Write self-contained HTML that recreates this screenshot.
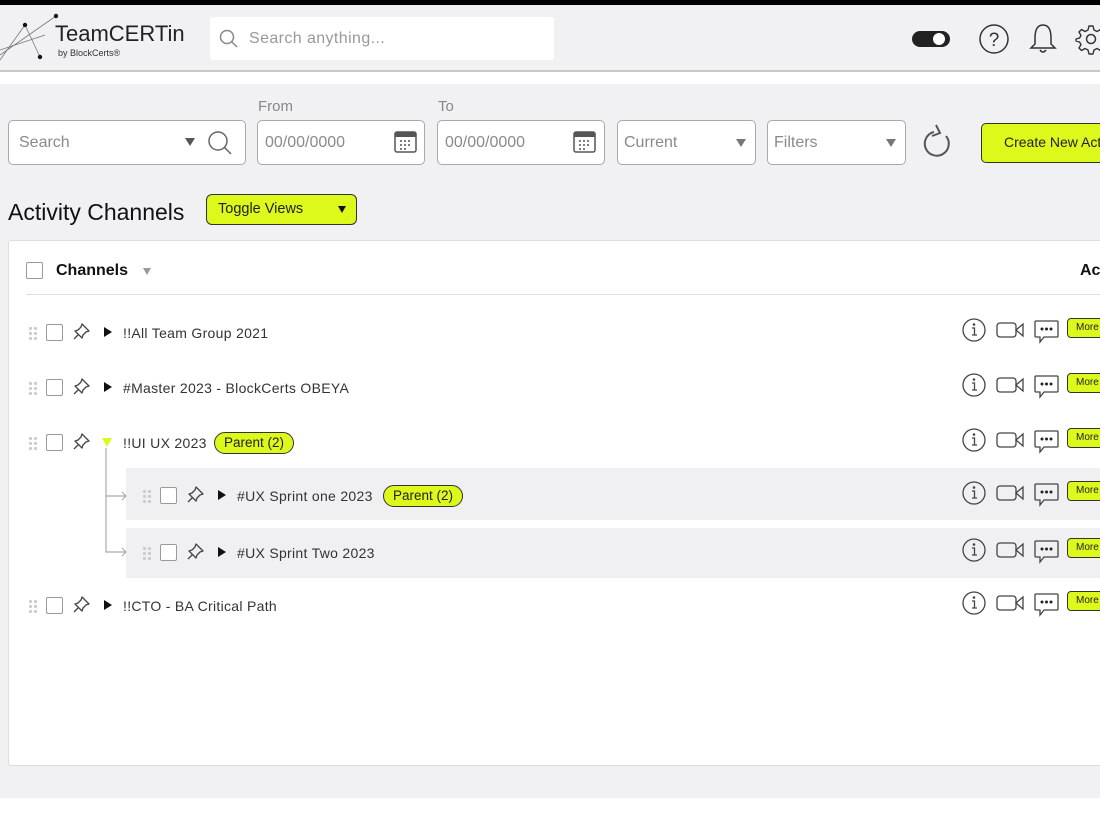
<!DOCTYPE html>
<html><head><meta charset="utf-8">
<style>
*{box-sizing:border-box;margin:0;padding:0}
body{width:1100px;height:825px;overflow:hidden;background:#fff;font-family:"Liberation Sans",sans-serif;position:relative;color:#222}
.a{position:absolute;white-space:nowrap}
.box{position:absolute;background:#fff;border:1px solid #a9a9a9;border-radius:5px}
.ph{position:absolute;color:#8a8a8a;font-size:16px}
.cb{position:absolute;width:17px;height:17px;border:1.5px solid #999;border-radius:2px;background:#fff}
.lbl{position:absolute;font-size:14px;color:#333;letter-spacing:.3px;white-space:nowrap}
.pill{position:absolute;background:#ddf81b;border:1.5px solid #333;border-radius:11px;font-size:13.5px;height:22px;line-height:19px;padding:0 9px;color:#222;white-space:nowrap}
.more{position:absolute;left:1067px;width:50px;height:20px;background:#ddf81b;border:1.5px solid #333;border-radius:4px;font-size:10px;line-height:17px;padding-left:8px}
.tri{position:absolute;width:0;height:0;border-top:5px solid transparent;border-bottom:5px solid transparent;border-left:8px solid #111}
.drag{position:absolute;width:10px;height:14px;background:radial-gradient(circle,#ccc 1.6px,transparent 1.8px) 0 0/5px 5px}
</style></head><body>
<div class="a" style="left:0;top:0;width:1100px;height:5px;background:#000"></div>
<div class="a" style="left:0;top:5px;width:1100px;height:67px;background:#f1f0f3;border-bottom:2px solid #c8c8c8"></div>
<svg class="a" style="left:0;top:10px" width="70" height="55"><g stroke="#777" stroke-width=".8" fill="none"><line x1="0" y1="45" x2="56" y2="6"/><line x1="0" y1="50" x2="25" y2="15"/><line x1="25" y1="15" x2="40" y2="47"/><line x1="0" y1="40" x2="45" y2="25"/></g><g fill="#111"><circle cx="56" cy="6" r="2.2"/><circle cx="25" cy="15" r="2.2"/><circle cx="40" cy="47" r="2.2"/></g></svg>
<div class="a" style="left:55px;top:21px;font-size:22px;color:#222">TeamCERTin</div>
<div class="a" style="left:58px;top:48px;font-size:9px;color:#333">by BlockCerts®</div>
<div class="a" style="left:210px;top:17px;width:344px;height:43px;background:#fff;border-radius:3px"></div>
<svg class="a" style="left:219px;top:29px" width="20" height="20"><circle cx="8" cy="8" r="6.5" stroke="#888" stroke-width="1.5" fill="none"/><line x1="13" y1="13" x2="18" y2="18" stroke="#888" stroke-width="1.5"/></svg>
<div class="a" style="left:249px;top:30px;font-size:16px;color:#999;letter-spacing:.4px">Search anything...</div>
<div class="a" style="left:912px;top:31px;width:38px;height:16px;background:#222;border-radius:8px"></div>
<div class="a" style="left:933px;top:33px;width:12px;height:12px;background:#fff;border-radius:6px"></div>
<svg class="a" style="left:978px;top:23px" width="32" height="32"><circle cx="16" cy="16" r="14" stroke="#333" stroke-width="1.5" fill="none"/><text x="16" y="23" font-size="19" text-anchor="middle" fill="#333" font-family="Liberation Sans">?</text></svg>
<svg class="a" style="left:1028px;top:22px" width="30" height="34"><path d="M15 3 C8 3 7 10 7 16 L7 22 L3 26 L27 26 L23 22 L23 16 C23 10 22 3 15 3Z" stroke="#333" stroke-width="1.5" fill="none"/><path d="M12 28 Q15 32 18 28" stroke="#333" stroke-width="1.5" fill="none"/></svg>
<svg class="a" style="left:1075px;top:23px" width="32" height="32"><circle cx="16" cy="16" r="4.5" stroke="#333" stroke-width="1.5" fill="none"/><path d="M14 3 H18 L19 7 L22 8.5 L25.5 6.5 L28 9 L26 12.5 L27.5 15 L31 16 V18 L27.5 19 L26 21.5 L28 25 L25.5 27.5 L22 25.5 L19 27 L18 31 H14 L13 27 L10 25.5 L6.5 27.5 L4 25 L6 21.5 L4.5 19 L1 18 V16 L4.5 15 L6 12.5 L4 9 L6.5 6.5 L10 8.5 L13 7Z" stroke="#333" stroke-width="1.4" fill="none" stroke-linejoin="round"/></svg>
<div class="a" style="left:0;top:84px;width:1100px;height:714px;background:#f1f0f3"></div>
<div class="a" style="left:258px;top:98px;font-size:15px;color:#888">From</div>
<div class="a" style="left:438px;top:98px;font-size:15px;color:#888">To</div>
<div class="box" style="left:8px;top:120px;width:238px;height:45px"></div>
<div class="ph" style="left:19px;top:134px">Search</div>
<div class="a" style="left:185px;top:138px;border-left:5px solid transparent;border-right:5px solid transparent;border-top:8px solid #555"></div>
<svg class="a" style="left:206px;top:129px" width="28" height="28"><circle cx="12" cy="12" r="9" stroke="#666" stroke-width="1.5" fill="none"/><line x1="18" y1="18" x2="25" y2="25" stroke="#666" stroke-width="1.5"/></svg>
<div class="box" style="left:257px;top:120px;width:168px;height:45px"></div>
<div class="ph" style="left:265px;top:134px">00/00/0000</div>
<div class="box" style="left:437px;top:120px;width:168px;height:45px"></div>
<div class="ph" style="left:445px;top:134px">00/00/0000</div>
<svg class="a" style="left:393px;top:129px" width="26" height="26"><rect x="2" y="3" width="21" height="20" rx="2" fill="none" stroke="#555" stroke-width="1.5"/><rect x="2" y="3" width="21" height="5" fill="#555"/><g fill="#555"><circle cx="8" cy="12" r="1"/><circle cx="12" cy="12" r="1"/><circle cx="16" cy="12" r="1"/><circle cx="8" cy="16" r="1"/><circle cx="12" cy="16" r="1"/><circle cx="16" cy="16" r="1"/><circle cx="8" cy="20" r="1"/><circle cx="12" cy="20" r="1"/></g></svg>
<svg class="a" style="left:572px;top:129px" width="26" height="26"><rect x="2" y="3" width="21" height="20" rx="2" fill="none" stroke="#555" stroke-width="1.5"/><rect x="2" y="3" width="21" height="5" fill="#555"/><g fill="#555"><circle cx="8" cy="12" r="1"/><circle cx="12" cy="12" r="1"/><circle cx="16" cy="12" r="1"/><circle cx="8" cy="16" r="1"/><circle cx="12" cy="16" r="1"/><circle cx="16" cy="16" r="1"/><circle cx="8" cy="20" r="1"/><circle cx="12" cy="20" r="1"/></g></svg>
<div class="box" style="left:617px;top:120px;width:139px;height:45px"></div>
<div class="ph" style="left:624px;top:134px">Current</div>
<div class="a" style="left:736px;top:139px;border-left:5px solid transparent;border-right:5px solid transparent;border-top:8px solid #777"></div>
<div class="box" style="left:767px;top:120px;width:139px;height:45px"></div>
<div class="ph" style="left:774px;top:134px">Filters</div>
<div class="a" style="left:886px;top:139px;border-left:5px solid transparent;border-right:5px solid transparent;border-top:8px solid #777"></div>
<svg class="a" style="left:922px;top:122px" width="36" height="40"><path d="M24 14 A12 12 0 1 1 12 10" stroke="#555" stroke-width="2" fill="none"/><path d="M14 3 L18 11 L10 14" stroke="#555" stroke-width="2" fill="none"/></svg>
<div class="a" style="left:981px;top:123px;width:140px;height:40px;background:#ddf81b;border:1.5px solid #333;border-radius:5px;font-size:14px;line-height:37px;padding-left:22px">Create New Activity</div>
<div class="a" style="left:8px;top:199px;font-size:23px;color:#111">Activity Channels</div>
<div class="a" style="left:206px;top:194px;width:151px;height:31px;background:#ddf81b;border:1.5px solid #333;border-radius:6px;font-size:14.5px;line-height:28px;padding-left:11px">Toggle Views</div>
<div class="a" style="left:338px;top:206px;border-left:4px solid transparent;border-right:4px solid transparent;border-top:7px solid #111"></div>
<div class="a" style="left:8px;top:240px;width:1100px;height:526px;background:#fff;border:1px solid #ddd;border-radius:3px"></div>
<div class="cb" style="left:26px;top:262px"></div>
<div class="a" style="left:56px;top:262px;font-size:16px;font-weight:bold;color:#111">Channels</div>
<div class="a" style="left:143px;top:268px;border-left:4px solid transparent;border-right:4px solid transparent;border-top:7px solid #999"></div>
<div class="a" style="left:1080px;top:262px;font-size:16px;font-weight:bold;color:#111">Actions</div>
<div class="a" style="left:26px;top:294px;width:1080px;height:1px;background:#ddd"></div>
<div class="a" style="left:126px;top:468px;width:980px;height:52px;background:#f0f0f2"></div>
<div class="a" style="left:126px;top:528px;width:980px;height:50px;background:#f0f0f2"></div>
<svg class="a" style="left:100px;top:448px" width="30" height="110"><path d="M6 0 V104 H26 M6 48 H26 M22 44 L26 48 L22 52 M22 100 L26 104 L22 108" stroke="#aaa" stroke-width="1.2" fill="none"/></svg>
<div id="rows"></div>
<script>
var rows=[[333,28,"!!All Team Group 2021",0,0],[388,28,"#Master 2023 - BlockCerts OBEYA",0,0],[443,28,"!!UI UX 2023",1,1],[496,142,"#UX Sprint one 2023",1,0],[553,142,"#UX Sprint Two 2023",0,0],[606,28,"!!CTO - BA Critical Path",0,0]];
var h="";
var pin='<path d="M9 2 L16 9 L13 10 L10 13 L9 16 L2 9 L5 8 L8 5Z M5.5 12.5 L1 17" stroke="#444" stroke-width="1.3" fill="none" stroke-linejoin="round"/>';
rows.forEach(function(r){var y=r[0],x=r[1];
h+='<div class="drag" style="left:'+x+'px;top:'+(y-7)+'px"></div>';
h+='<div class="cb" style="left:'+(x+18)+'px;top:'+(y-9)+'px"></div>';
h+='<svg class="a" style="left:'+(x+45)+'px;top:'+(y-11)+'px" width="20" height="20">'+pin+'</svg>';
if(r[4])h+='<div class="a" style="left:'+(x+74)+'px;top:'+(y-5)+'px;border-left:5px solid transparent;border-right:5px solid transparent;border-top:9px solid #ddf81b"></div>';
else h+='<div class="tri" style="left:'+(x+76)+'px;top:'+(y-6)+'px"></div>';
h+='<div class="lbl" style="left:'+(x+95)+'px;top:'+(y-8)+'px">'+r[2]+'</div>';
if(r[3]){h+='<div class="pill" style="left:'+(x==28?214:383)+'px;top:'+(y-11)+'px">Parent (2)</div>';}
var iy=y-3;
h+='<svg class="a" style="left:961px;top:'+(iy-13)+'px" width="26" height="26"><circle cx="13" cy="13" r="11" stroke="#444" stroke-width="1.3" fill="none"/><circle cx="13" cy="7.5" r="1.3" fill="#444"/><path d="M11 11 H13.5 V18 M11 18 H16" stroke="#444" stroke-width="1.3" fill="none"/></svg>';
h+='<svg class="a" style="left:995px;top:'+(iy-10)+'px" width="30" height="20"><rect x="2" y="3" width="19" height="14" rx="3" stroke="#444" stroke-width="1.3" fill="none"/><path d="M21 10 L28 4 V16 Z" stroke="#444" stroke-width="1.3" fill="none"/></svg>';
h+='<svg class="a" style="left:1033px;top:'+(iy-11)+'px" width="28" height="26"><path d="M3 2 H24 Q25 2 25 3 V17 Q25 18 24 18 H11 L7 23 V18 H3 Q2 18 2 17 V3 Q2 2 3 2Z" stroke="#444" stroke-width="1.3" fill="none"/><g fill="#222"><circle cx="9" cy="10" r="1.5"/><circle cx="13.5" cy="10" r="1.5"/><circle cx="18" cy="10" r="1.5"/></g></svg>';
h+='<div class="more" style="top:'+(iy-12)+'px">More</div>';
});
document.getElementById("rows").innerHTML=h;
</script>
</body></html>
